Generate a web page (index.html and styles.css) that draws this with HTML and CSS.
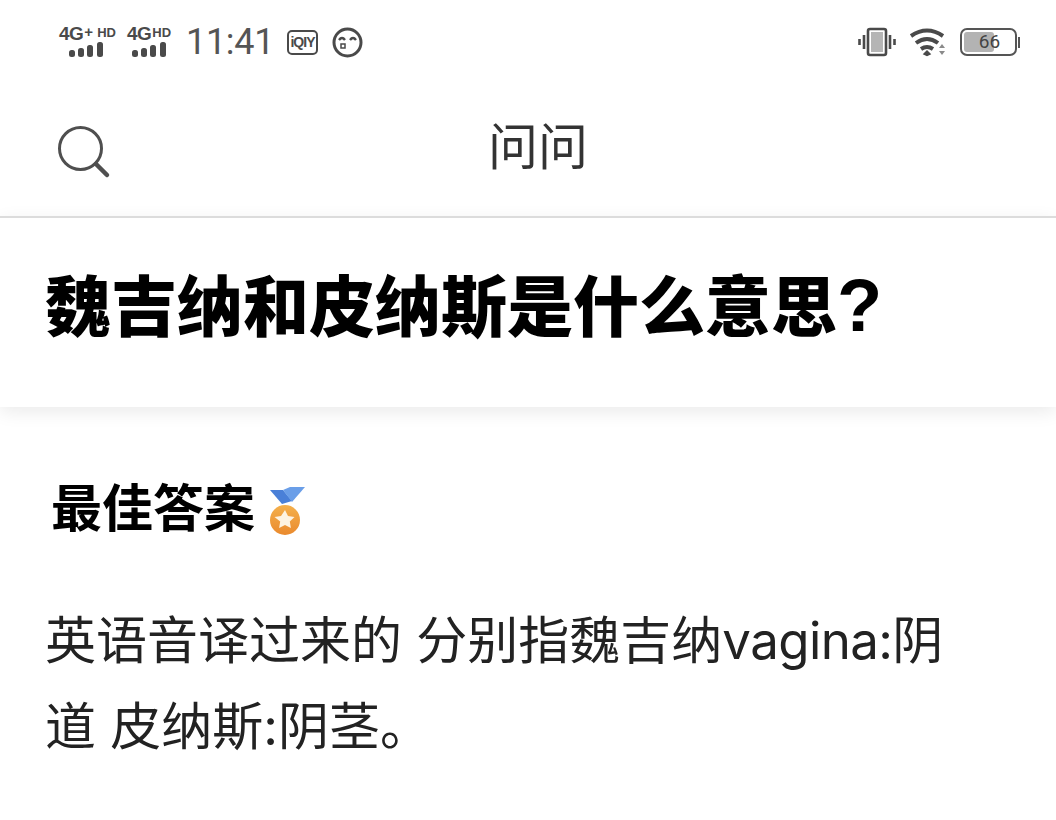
FILE: index.html
```html
<!DOCTYPE html>
<html lang="zh">
<head>
    <meta charset="UTF-8">
    <meta name="viewport" content="width=device-width, initial-scale=1.0">
    <title>问问</title>
    <link rel="stylesheet" href="styles.css">
</head>
<body>

<div class="status-bar">
    <div class="status-left">
        <div class="signal first">
            <div class="net"><span class="net-4g">4G</span><span class="net-plus">+</span><span class="net-hd">HD</span></div>
            <svg class="bars" width="36" height="17" viewBox="0 0 36 17"><rect x="1" y="9" width="6" height="7" rx="2.500"/><rect x="10" y="7" width="6" height="9" rx="2.500"/><rect x="19" y="4" width="6" height="12" rx="2.500"/><rect x="29" y="1" width="6" height="15" rx="2.500"/></svg>
        </div>
        <div class="signal second">
            <div class="net"><span class="net-4g">4G</span><span class="net-hd">HD</span></div>
            <svg class="bars" width="36" height="17" viewBox="0 0 36 17"><rect x="1" y="9" width="6" height="7" rx="2.500"/><rect x="10" y="7" width="6" height="9" rx="2.500"/><rect x="19" y="4" width="6" height="12" rx="2.500"/><rect x="29" y="1" width="6" height="15" rx="2.500"/></svg>
        </div>
        <span class="clock">11:41</span>
        <div class="iqiyi"><span>iQIY</span></div>
        <svg class="face" width="31" height="31" viewBox="0 0 31 31" fill="none" stroke="#4a4a4a" stroke-width="3"><circle cx="15.500" cy="15.500" r="13.500"/><path d="M7 13q3-4 6 0M18 13q3-4 6 0" stroke-width="2.400"/><rect x="9" y="17" width="4" height="4" stroke-width="1.500"/></svg>
    </div>
    <div class="status-right">
        <svg width="38" height="30" viewBox="0 0 38 30"><g fill="none" stroke="#4a4a4a"><rect x="10" y="2" width="18" height="26" rx="2" stroke-width="2.600"/><rect x="13" y="5" width="12" height="20" fill="#b5b5b5" stroke="none"/><path d="M6 8v14M32 8v14" stroke-width="2.600"/><path d="M1.500 12v6M36.500 12v6" stroke-width="2.600"/></g></svg>
        <svg width="38" height="30" viewBox="0 0 38 30" fill="none" stroke="#4a4a4a" stroke-width="4"><path d="M2 9q16-11 32 0"/><path d="M7 16q11-8 22 0"/><path d="M12 22q6-4 12 0"/><path d="M15 27l3-3 3 3-3 1.500z" fill="#4a4a4a" stroke-width="1.500"/><path d="M33 17l3 4h-6zM33 28l3-4h-6z" fill="#8a8a8a" stroke="none"/></svg>
        <div class="battery">
            <div class="battery-body">
                <div class="battery-level"></div>
                <span class="battery-num">66</span>
            </div>
            <div class="battery-tip"></div>
        </div>
    </div>
</div>

<div class="nav-bar">
    <svg class="search" width="56" height="56" viewBox="0 0 56 56" fill="none" stroke="#4f4f4f"><circle cx="24.500" cy="24.500" r="21" stroke-width="3"/><path d="M40 40l11 11" stroke-width="4.500" stroke-linecap="round"/></svg>
    <div class="nav-title">问问</div>
</div>

<div class="question">
    <h1>魏吉纳和皮纳斯是什么意思<span class="qmark">?</span></h1>
</div>

<div class="answer">
    <div class="best">
        <span>最佳答案</span>
        <svg class="medal" width="40" height="50" viewBox="0 0 40 50"><defs><linearGradient id="medalFill" x1="0" y1="0" x2="0" y2="1"><stop offset="0" stop-color="#f4b04c"/><stop offset="1" stop-color="#ea8a2e"/></linearGradient></defs><path d="M4 3h13l9 11-10 3z" fill="#4a80d8"/><path d="M24 0h15L26 15 17 3z" fill="#6a9ee8"/><circle cx="19" cy="33" r="15" fill="url(#medalFill)"/><path d="M19 23l3 6 6.500 1-4.700 4.500 1.100 6.500-5.900-3-5.900 3 1.100-6.500L8.500 30l6.500-1z" fill="#fdf3e2"/></svg>
    </div>
    <p>英语音译过来的 分别指魏吉纳<span class="latin">vagina:</span>阴道 皮纳斯:阴茎。</p>
</div>

</body>
</html>
```

FILE: styles.css
```css
body {
    margin: 0;
    background: white;
    font-family: "Noto Sans CJK SC", "Noto Sans", sans-serif;
    color: black;
    overflow: hidden;
}
.status-bar {
    height: 84px;
    display: flex;
    justify-content: space-between;
    align-items: center;
    padding: 0 36px 0 59px;
}
.status-left, .status-right {
    display: flex;
    align-items: center;
}
.signal {
    display: flex;
    flex-direction: column;
    color: #4a4a4a;
}
.signal.first {
    width: 68px;
}
.signal.second {
    width: 59px;
}
.net {
    height: 15px;
    display: flex;
    font-family: "Liberation Sans", sans-serif;
    font-weight: bold;
    line-height: 15px;
}
.net-4g {
    font-size: 19px;
    letter-spacing: -0.5px;
}
.net-plus {
    font-size: 15px;
    line-height: 12px;
    margin: 0 3px 0 1px;
}
.net-hd {
    font-size: 13px;
    line-height: 13px;
    margin-left: 1px;
}
.bars {
    fill: #4a4a4a;
    margin-left: 9px;
}
.second .bars {
    margin-left: 4px;
}
.clock {
    font-family: Roboto, sans-serif;
    font-size: 36px;
    letter-spacing: -0.3px;
    color: #555;
    width: 101px;
}
.iqiyi {
    width: 31px;
    height: 25px;
    border: 2px solid #4a4a4a;
    border-radius: 5px;
    box-sizing: border-box;
    display: flex;
    align-items: center;
    justify-content: center;
    font-family: "Liberation Sans", sans-serif;
    font-weight: bold;
    font-size: 14px;
    letter-spacing: -1px;
    color: #4a4a4a;
    margin-right: 14px;
    overflow: hidden;
}
.status-right {
    gap: 13px;
}
.battery {
    display: flex;
    align-items: center;
}
.battery-body {
    position: relative;
    width: 57px;
    height: 28px;
    box-sizing: border-box;
    border: 2px solid #555;
    border-radius: 7px;
    padding: 2px;
}
.battery-level {
    width: 62%;
    height: 100%;
    background: #b3b3b3;
    border-radius: 3px;
}
.battery-num {
    position: absolute;
    left: 2px;
    right: 0;
    top: 0;
    text-align: center;
    font-family: Roboto, sans-serif;
    font-size: 19px;
    line-height: 24px;
    color: #444;
}
.battery-tip {
    width: 2px;
    height: 11px;
    background: #555;
    margin-left: 1px;
}
.nav-bar {
    height: 134px;
    box-sizing: border-box;
    display: flex;
    align-items: center;
    justify-content: center;
    position: relative;
    border-bottom: 2px solid #dcdcdc;
}
.search {
    position: absolute;
    left: 56px;
    top: 40px;
}
.nav-title {
    font-size: 50px;
    color: #333;
    line-height: 1;
    margin: -14px 0 0 20px;
}
.question {
    height: 189px;
    box-sizing: border-box;
    padding: 0 45px;
    display: flex;
    align-items: center;
    box-shadow: 0 4px 18px rgba(0, 0, 0, 0.09);
}
.question h1 {
    margin: 0 0 20px;
    font-size: 66px;
    line-height: 80px;
    font-weight: 900;
    color: black;
}
.qmark {
    font-family: "Liberation Sans", sans-serif;
    font-size: 74px;
    font-weight: bold;
    line-height: 1;
}
.answer {
    padding: 63px 45px 0;
}
.best {
    display: flex;
    align-items: center;
    gap: 11px;
    margin-left: 6px;
    font-size: 51px;
    font-weight: bold;
    line-height: 70px;
}
.medal {
    margin-top: 14px;
}
.answer p {
    margin: 58px 0 0;
    font-family: Inter, "Noto Sans CJK SC", sans-serif;
    font-size: 51px;
    line-height: 86px;
    color: #222;
    width: 920px;
}
.latin {
    letter-spacing: -0.6px;
}
```
